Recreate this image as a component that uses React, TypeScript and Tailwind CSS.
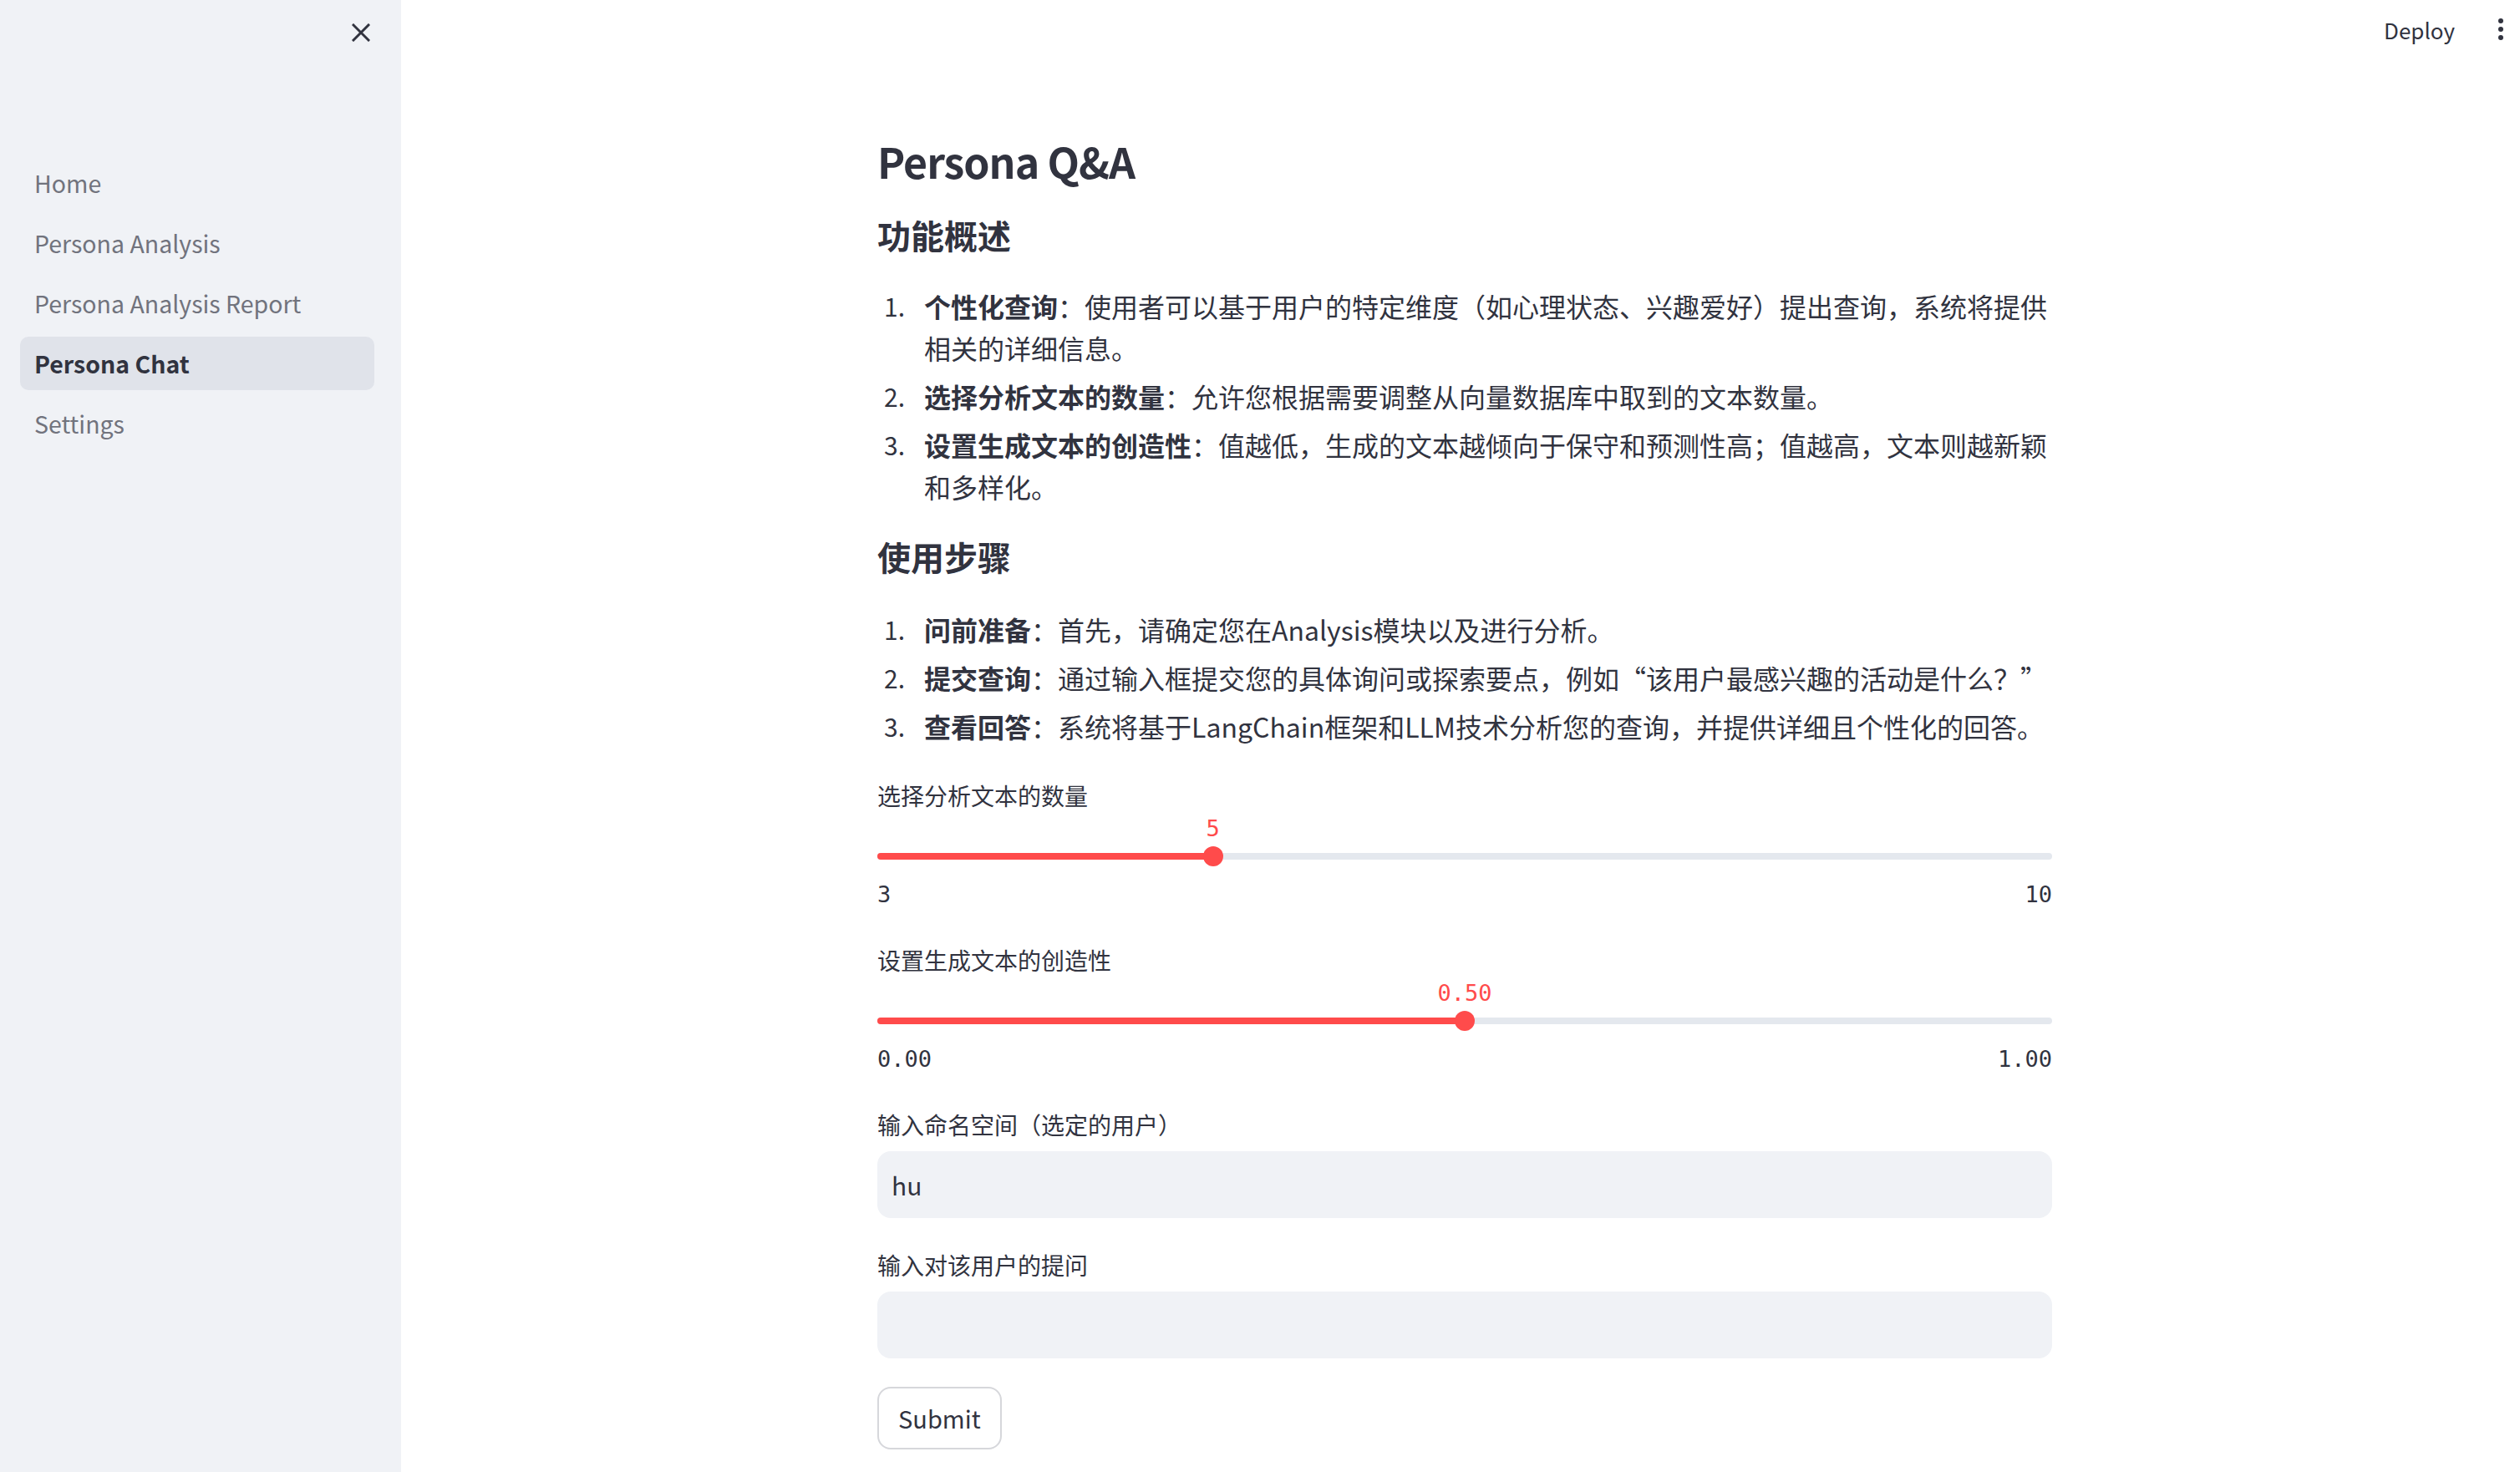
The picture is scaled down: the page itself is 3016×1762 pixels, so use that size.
import React from "react";

const font = { fontFamily: '"Noto Sans CJK SC", "Noto Sans", sans-serif' };
const mono = { fontFamily: '"DejaVu Sans Mono", "Liberation Mono", monospace' };

const navItems = ["Home", "Persona Analysis", "Persona Analysis Report", "Persona Chat", "Settings"];

const features = [
    { bold: "个性化查询", text: "使用者可以基于用户的特定维度（如心理状态、兴趣爱好）提出查询，系统将提供相关的详细信息。" },
    { bold: "选择分析文本的数量", text: "允许您根据需要调整从向量数据库中取到的文本数量。" },
    { bold: "设置生成文本的创造性", text: "值越低，生成的文本越倾向于保守和预测性高；值越高，文本则越新颖和多样化。" },
];

const steps = [
    { bold: "问前准备", text: "首先，请确定您在Analysis模块以及进行分析。" },
    { bold: "提交查询", text: "通过输入框提交您的具体询问或探索要点，例如“该用户最感兴趣的活动是什么？”" },
    { bold: "查看回答", text: "系统将基于LangChain框架和LLM技术分析您的查询，并提供详细且个性化的回答。" },
];

const Sidebar = () => {
    return (
        <aside className="w-[480px] shrink-0 bg-[#f0f2f6] min-h-[1762px] flex flex-col">
            <div className="h-[75px] flex items-center justify-end pr-[37px]">
                <svg width="22" height="22" viewBox="0 0 22 22" className="mt-[2px]">
                    <path d="M2 2 L20 20 M20 2 L2 20" stroke="#31333f" strokeWidth="3" strokeLinecap="square" />
                </svg>
            </div>
            <ul className="mt-[112px] px-[24px] flex flex-col gap-[8px] pr-[32px]">
                {navItems.map((item, index) => (
                    <li
                        key={index}
                        className={
                            item === "Persona Chat"
                                ? "h-[64px] rounded-[10px] bg-[#e0e3ea] flex items-center px-[17px] text-[28.5px] font-semibold text-[#31333f]"
                                : "h-[64px] rounded-[10px] flex items-center px-[17px] text-[28.5px] text-[#71737d]"
                        }
                    >
                        {item}
                    </li>
                ))}
            </ul>
        </aside>
    );
};

const Slider = ({ label, min, max, value, pct }: { label: string; min: string; max: string; value: string; pct: number }) => {
    return (
        <div className="flex flex-col">
            <div className="h-[40px] leading-[40px] text-[28px] text-[#31333f]">{label}</div>
            <div className="relative h-[40px]">
                <span
                    className="absolute top-0 -translate-x-1/2 leading-[40px] text-[27px] text-[#ff4b4b]"
                    style={{ ...mono, left: `${pct}%` }}
                >
                    {value}
                </span>
            </div>
            <div className="relative h-[26px] flex items-center">
                <div className="w-full h-[8px] rounded-full bg-[#e4e8ee]" />
                <div className="absolute left-0 h-[8px] rounded-full bg-[#ff4b4b]" style={{ width: `${pct}%` }} />
                <div
                    className="absolute w-[24px] h-[24px] rounded-full bg-[#ff4b4b] -translate-x-1/2"
                    style={{ left: `${pct}%` }}
                />
            </div>
            <div className="mt-[13px] h-[40px] flex justify-between items-center text-[27px] text-[#31333f]" style={mono}>
                <span>{min}</span>
                <span>{max}</span>
            </div>
        </div>
    );
};

const Item = ({ n, bold, text }: { n: number; bold: string; text: string }) => (
    <li className="flex">
        <span className="w-[56px] shrink-0 pl-[8px] text-[30px]">{n}.</span>
        <p>
            <span className="font-bold">{bold}</span>：{text}
        </p>
    </li>
);

const App = () => {
    return (
        <div className="flex w-[3016px] min-h-[1762px] bg-white text-[#31333f]" style={font}>
            <Sidebar />
            <main className="flex-1 flex flex-col">
                <header className="h-[70px] flex items-center justify-end pr-[20px] gap-[52px]">
                    <span className="text-[26px] text-[#31333f]">Deploy</span>
                    <svg width="6" height="26" viewBox="0 0 6 26">
                        <circle cx="3" cy="3" r="3" fill="#31333f" />
                        <circle cx="3" cy="13" r="3" fill="#31333f" />
                        <circle cx="3" cy="23" r="3" fill="#31333f" />
                    </svg>
                </header>
                <section className="ml-[570px] w-[1406px] pt-[88px] flex flex-col">
                    <h1 className="text-[50px] leading-[68px] font-semibold tracking-[-1px]">Persona Q&amp;A</h1>
                    <h3 className="mt-[29px] text-[40px] leading-[52px] font-bold">功能概述</h3>
                    <ol className="mt-[34px] text-[32px] leading-[50px] flex flex-col gap-[8px]">
                        {features.map((elt, index) => (
                            <Item key={index} n={index + 1} bold={elt.bold} text={elt.text} />
                        ))}
                    </ol>
                    <h3 className="mt-[33px] text-[40px] leading-[52px] font-bold">使用步骤</h3>
                    <ol className="mt-[36px] text-[32px] leading-[50px] flex flex-col gap-[8px]">
                        {steps.map((elt, index) => (
                            <Item key={index} n={index + 1} bold={elt.bold} text={elt.text} />
                        ))}
                    </ol>
                    <div className="mt-[38px]">
                        <Slider label="选择分析文本的数量" min="3" max="10" value="5" pct={(2 / 7) * 100} />
                    </div>
                    <div className="mt-[38px]">
                        <Slider label="设置生成文本的创造性" min="0.00" max="1.00" value="0.50" pct={50} />
                    </div>
                    <label className="mt-[38px] h-[40px] leading-[40px] text-[28px]">输入命名空间（选定的用户）</label>
                    <div className="mt-[12px] h-[80px] rounded-[16px] bg-[#f0f2f6] flex items-center px-[17px] text-[30px]">
                        hu
                    </div>
                    <label className="mt-[36px] h-[40px] leading-[40px] text-[28px]">输入对该用户的提问</label>
                    <div className="mt-[12px] h-[80px] rounded-[16px] bg-[#f0f2f6]" />
                    <div className="mt-[34px]">
                        <button className="h-[75px] px-[23px] rounded-[16px] border-2 border-[#d6d7db] bg-white text-[29px] text-[#31333f]">
                            Submit
                        </button>
                    </div>
                </section>
            </main>
        </div>
    );
};

export default App;
